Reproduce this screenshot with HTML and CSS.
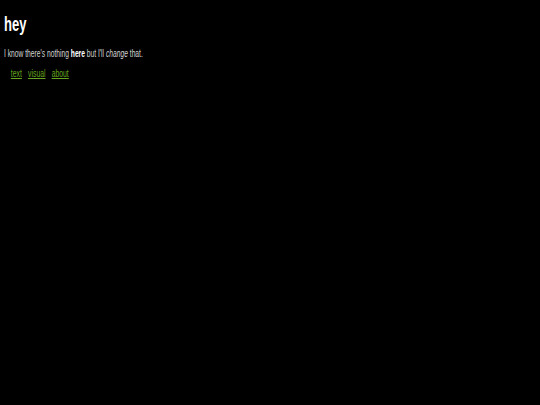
FILE: index.html
```html
<!DOCTYPE html>
<html>
<head>
<meta charset="utf-8">
<link rel="stylesheet" href="styles.css">
</head>
<body>
<main class="page">
<h1 class="title">hey</h1>
<p class="intro">I know there's nothing <b>here</b> but I'll <i>change</i> that.</p>
<nav class="links">
<a href="#">text</a>
<a href="#">visual</a>
<a href="#">about</a>
</nav>
</main>
</body>
</html>
```
FILE: styles.css
```css
html, body {
  background: #000;
}
body {
  margin: 0;
  padding: 12px 0 0;
  color: #d4d4d4;
  font-family: "Liberation Sans", Arial, sans-serif;
}
.page {
  padding-left: 6.5px;
  transform: scaleX(0.62);
  transform-origin: 0 0;
}
.title {
  margin: 0;
  font-size: 21px;
  font-weight: bold;
  color: #fff;
  line-height: 24px;
}
.intro {
  margin: 11px 0 0;
  font-size: 10.8px;
  line-height: 13px;
}
.intro b {
  color: #fff;
}
.links {
  margin: 7px 0 0 11px;
  display: flex;
  gap: 10px;
  font-size: 11px;
  line-height: 13px;
}
.links a {
  color: #66a61e;
}
```
